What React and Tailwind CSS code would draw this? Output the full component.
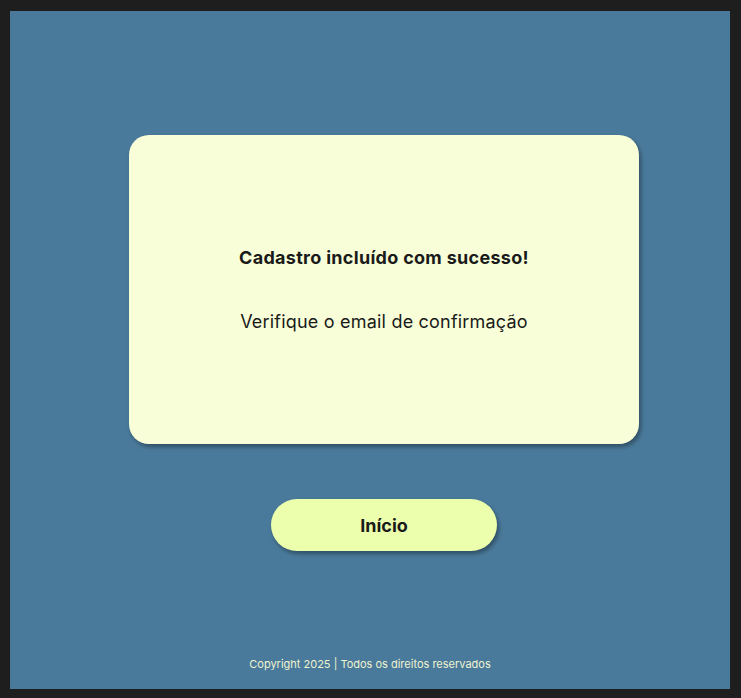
export default function App() {
  return (
    <div className="w-[741px] h-[698px] bg-[#1e1e1e] pt-[11px] pl-[10px] pr-[11px] pb-[9px] font-['Inter','Liberation_Sans',sans-serif]">
      <div className="w-[720px] h-[678px] bg-[#4a7a9b] flex flex-col items-center pl-[28px] pt-[124px]">
        {/* card */}
        <div className="w-[510px] h-[309px] rounded-[20px] bg-[#f8fed8] shadow-[2px_3px_4px_rgba(0,0,0,0.35)] flex flex-col items-center justify-center gap-[42px] text-[#1a1a1a]">
          <h1 className="text-[18px] font-bold leading-[22px] tracking-[0.3px]">Cadastro incluído com sucesso!</h1>
          <p className="text-[18px] leading-[22px] tracking-[0.2px]">Verifique o email de confirmação</p>
        </div>

        <button className="mt-[55px] w-[226px] h-[52px] rounded-full bg-[#ecffad] shadow-[2px_3px_4px_rgba(0,0,0,0.35)] text-[18px] font-bold text-[#1a1a1a]">
          Início
        </button>

        <div className="flex-1" />
        <p className="-ml-[28px] mb-[17px] text-[11px] text-[#eef3d0]">
          Copyright 2025 | Todos os direitos reservados
        </p>
      </div>
    </div>
  );
}
